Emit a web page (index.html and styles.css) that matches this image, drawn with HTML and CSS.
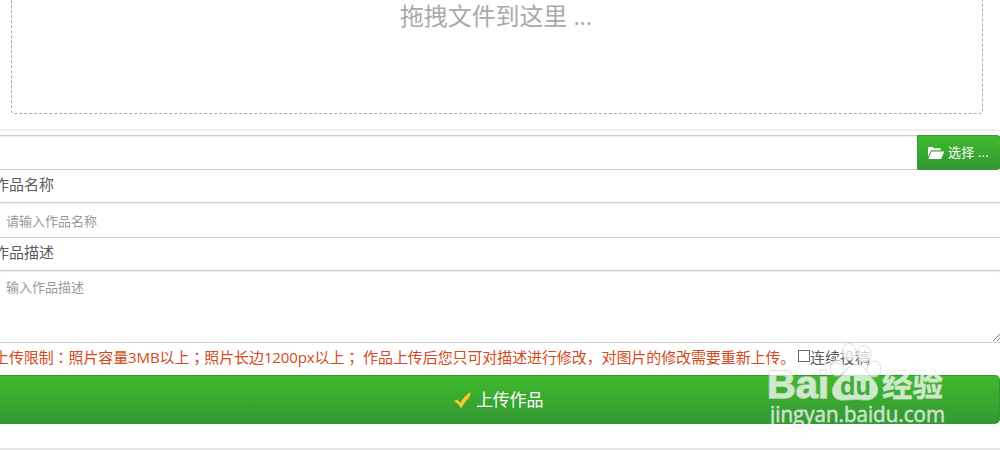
FILE: index.html
```html
<!DOCTYPE html>
<html lang="zh-CN">
<head>
<meta charset="utf-8">
<title>上传作品</title>
<link rel="stylesheet" href="styles.css">
</head>
<body>
<main class="page">
  <div class="drop"><span class="drop-text">拖拽文件到这里 ...</span></div>
  <div class="rule"></div>
  <div class="picker">
    <div class="file-name"></div>
    <div class="browse">
      <svg class="folder" viewBox="0 0 18 14"><path d="M1 11V2.2Q1 1 2.2 1H5.4Q6.5 1 6.7 2.2H12.5Q13.7 2.2 13.7 3.6V4.2H5.2Q4 4.2 3.5 5.2Z"/><path d="M5.2 5.4H17.3L14.4 12.3Q14.2 13 13.3 13H1.3L4.3 6.1Q4.6 5.4 5.2 5.4Z"/></svg>
      <span class="browse-text">选择 ...</span>
    </div>
  </div>
  <div class="label">作品名称</div>
  <div class="field name">请输入作品名称</div>
  <div class="label">作品描述</div>
  <div class="field area">输入作品描述
    <svg class="grip" viewBox="0 0 10 10"><path d="M1 9L9 1M5 9L9 5"/></svg>
  </div>
  <div class="note">
    <span class="limit">上传限制<span class="mid" lang="zh-TW">：</span>照片容量3MB以上<span class="mid" lang="zh-TW">；</span>照片长边1200px以上<span class="mid" lang="zh-TW">；</span> 作品上传后您只可对描述进行修改，对图片的修改需要重新上传。</span>
    <span class="check"></span>
    <span class="repeat">连续投稿</span>
  </div>
  <div class="submit">
    <svg class="tick" viewBox="0 0 18 18"><path d="M1 10L4.5 8.4L7.2 12Q11.5 4.5 17.5 1L17 5.5Q12.5 9.5 8 17.2Q5 12 1 10Z"/></svg>
    <span class="submit-text">上传作品</span>
  </div>
  <div class="footer-rule"></div>
  <svg class="watermark" viewBox="0 0 190 90">
    <g class="mark">
      <ellipse cx="75" cy="26" rx="6.5" ry="7.5"/>
      <ellipse cx="87" cy="10" rx="6.5" ry="8"/>
      <ellipse cx="102" cy="12" rx="6.5" ry="8"/>
      <ellipse cx="112" cy="27" rx="6.5" ry="7.5"/>
      <path d="M94 23C102 23 105 31 110 37C116 43 117 50 113 54C108 60 101 57 94 57C87 57 78 60 73 55C68 49 72 42 78 36C84 31 86 23 94 23Z"/>
      <text class="brand" x="5" y="56" textLength="62" lengthAdjust="spacingAndGlyphs">Bai</text>
      <text class="brand-cn" x="120" y="54" textLength="61" lengthAdjust="spacingAndGlyphs">经验</text>
      <text class="site" x="8" y="80" textLength="175" lengthAdjust="spacingAndGlyphs">jingyan.baidu.com</text>
    </g>
    <text class="du" x="78" y="53" textLength="31" lengthAdjust="spacingAndGlyphs">du</text>
  </svg>
</main>
</body>
</html>
```
FILE: styles.css
```css
* { box-sizing: border-box; }
body { margin: 0; background: #fff; }
.page {
  position: relative;
  width: 1000px;
  height: 450px;
  overflow: hidden;
  display: flex;
  flex-direction: column;
  font-family: "Open Sans", "Noto Sans CJK SC", sans-serif;
  font-size: 15px;
  color: #5c5c5c;
}
.drop {
  height: 124px;
  margin: -10px 17px 0 11px;
  border: 1px dashed #aaa;
  border-radius: 4px;
  text-align: center;
  flex: none;
}
.drop-text {
  display: block;
  padding: 7px 2px 0 0;
  font-size: 24px;
  line-height: 36px;
  letter-spacing: -0.1px;
  color: #aaa;
}
.rule { height: 2px; margin-top: 15px; background: #eee; flex: none; }
.picker { display: flex; height: 35px; margin-top: 4px; flex: none; }
.file-name {
  width: 917px;
  border-top: 1px solid #ccc;
  border-bottom: 1px solid #ccc;
  box-shadow: inset 0 1px 1px #eee;
}
.browse {
  width: 84px;
  margin-right: -1px;
  flex: none;
  display: flex;
  align-items: center;
  gap: 3px;
  padding-left: 9px;
  border: 1px solid #329a32;
  border-radius: 0 4px 4px 0;
  background: linear-gradient(#3fb92c, #339933);
  color: #fff;
  font-size: 13px;
  white-space: nowrap;
}
.browse-text { padding-bottom: 2px; letter-spacing: 0.2px; }
.folder { width: 18px; height: 14px; fill: #fff; flex: none; }
.label {
  height: 32px;
  margin-left: -6px;
  line-height: 28px;
  flex: none;
}
.field {
  height: 35px;
  padding-left: 6px;
  border-top: 1px solid #ccc;
  border-bottom: 1px solid #ccc;
  box-shadow: inset 0 1px 1px #eee;
  font-size: 13px;
  line-height: 33px;
  color: #999;
  flex: none;
}
.name { height: 36px; line-height: 36px; }
.area { position: relative; height: 73px; }
.grip {
  position: absolute;
  right: -2px;
  bottom: 0;
  width: 10px;
  height: 10px;
  fill: none;
  stroke: #777;
}
.note {
  display: flex;
  height: 32px;
  padding-bottom: 6px;
  align-items: center;
  margin-left: -6px;
  white-space: nowrap;
  flex: none;
}
.limit { width: 804px; color: #d24a20; letter-spacing: -0.1px; }
.mid { font-family: "Noto Sans CJK TC", sans-serif; line-height: 1; }
.check { width: 12px; height: 12px; border: 1px solid #666; }
.submit {
  display: flex;
  height: 49px;
  align-items: center;
  gap: 5px;
  padding-left: 453px;
  border: 1px solid #329a32;
  border-left: 0;
  border-radius: 0 5px 5px 0;
  background: linear-gradient(#3fb92c, #339933);
  color: #fff;
  font-size: 17px;
  letter-spacing: -0.2px;
  flex: none;
}
.submit-text { padding-bottom: 2px; }
.tick { width: 18px; height: 18px; fill: #fbc82c; }
.footer-rule { height: 2px; margin-top: 24px; background: #e5e5e5; flex: none; }
.watermark { position: absolute; left: 762px; top: 342px; width: 190px; height: 90px; }
.mark {
  fill: #fff;
  stroke: #d4d4d4;
  stroke-width: 1.8;
  stroke-linejoin: round;
  paint-order: stroke;
  opacity: 0.74;
}
.brand { font: bold 38px "Liberation Sans", sans-serif; }
.brand-cn { font: bold 31px "Noto Sans CJK SC", sans-serif; stroke-width: 0.8; }
.site { font: 500 21px "Open Sans", sans-serif; stroke-width: 0.8; }
.du { font: bold 25px "Liberation Sans", sans-serif; fill: #46aa3b; }
```
